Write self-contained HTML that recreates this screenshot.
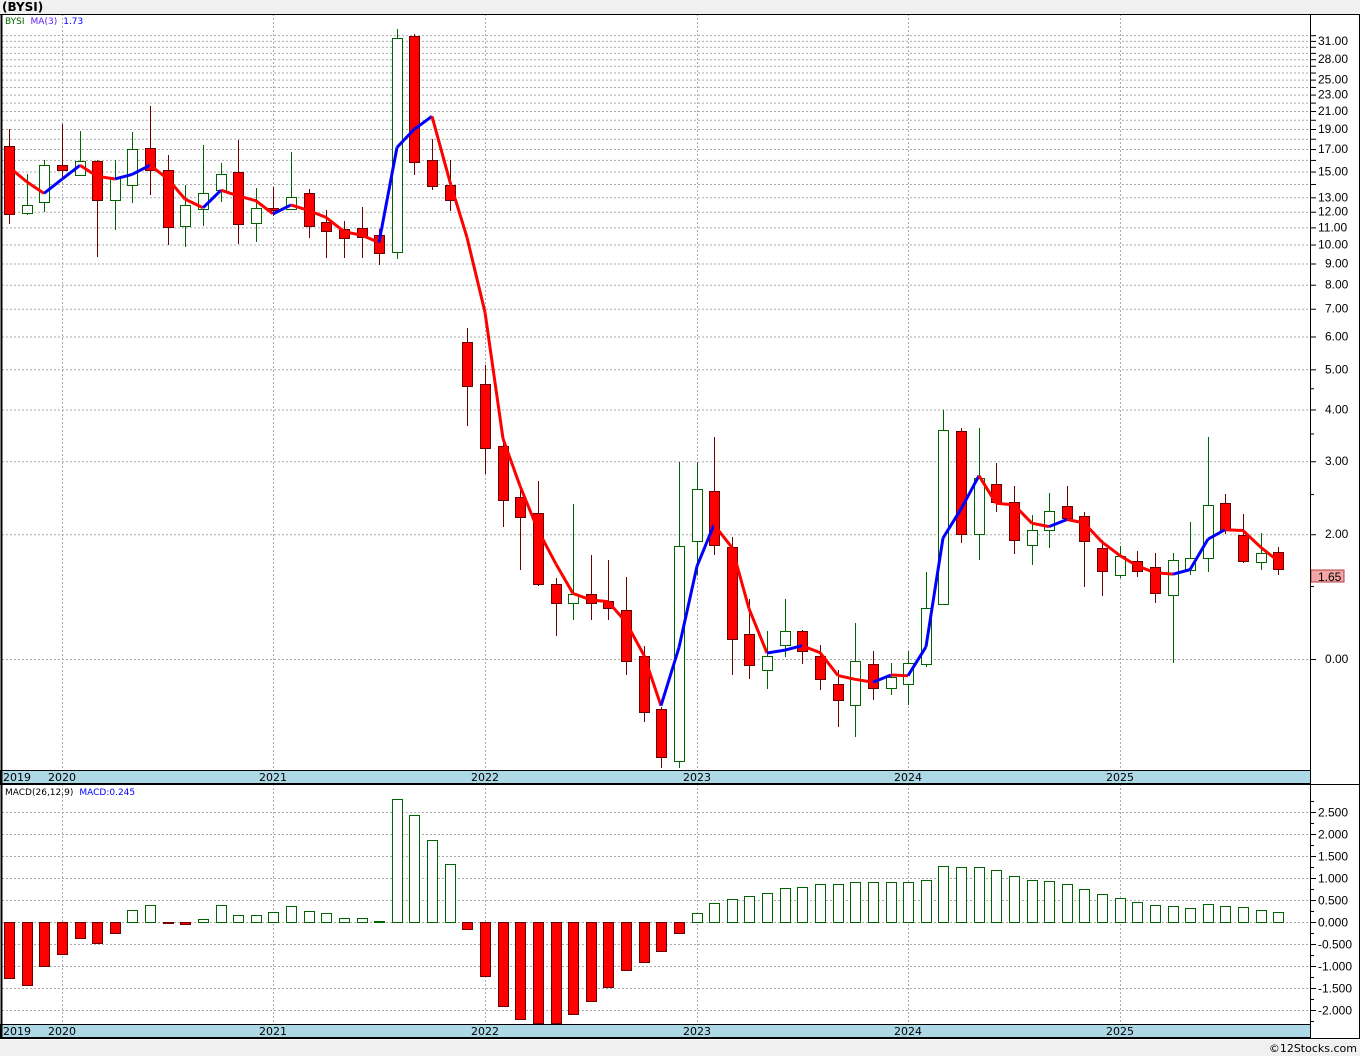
<!DOCTYPE html>
<html><head><meta charset="utf-8"><style>
html,body{margin:0;padding:0;background:#f0f0f0;width:1360px;height:1056px;overflow:hidden;font-family:"DejaVu Sans","Liberation Sans",sans-serif}
svg{display:block}
</style></head><body>
<svg id="s" width="1360" height="1056" xmlns="http://www.w3.org/2000/svg" font-family="DejaVu Sans, Liberation Sans, sans-serif" font-size="11">
<rect x="0" y="0" width="1360" height="1056" fill="#f0f0f0"/>
<text x="2" y="11" font-size="12" font-weight="bold" fill="#000">(BYSI)</text>
<rect x="0" y="14" width="1360" height="1026" fill="#fff"/>
<g id="g"></g>
<text x="1357" y="1052" font-size="11" text-anchor="end" fill="#000">©12Stocks.com</text>
</svg>
<script>
var g=document.getElementById('g'),h='';
function L(x1,y1,x2,y2,c,w,d){h+='<line x1="'+x1+'" y1="'+y1+'" x2="'+x2+'" y2="'+y2+'" stroke="'+c+'" stroke-width="'+(w||1)+'"'+(d?' stroke-dasharray="'+d+'"':'')+'/>';}
function R(x,y,w,hh,f,s){h+='<rect x="'+x+'" y="'+y+'" width="'+w+'" height="'+hh+'" fill="'+f+'" stroke="'+s+'" stroke-width="1"/>';}
function T(x,y,t,c,a){h+='<text x="'+x+'" y="'+y+'" fill="'+(c||'#000')+'"'+(a?' text-anchor="'+a+'"':'')+'>'+t+'</text>';}
function TA(x,y,t){h+='<text x="'+x+'" y="'+y+'" fill="#000" font-family="Liberation Sans, sans-serif" font-size="12">'+t+'</text>';}
var Y=function(p){return 659-180*Math.log(p);};
for(var p=1;p<=32;p++){var y=Y(p);if(y<16)continue;L(2,y+.5,1310,y+.5,'#aaa',1,'2,2');L(1310,y+.5,1316,y+.5,'#000');}
[1.5,2.5,3.5,4.5].forEach(function(p){L(1310,Y(p)+.5,1314,Y(p)+.5,'#000');});
var yrs=[[62,'2020'],[273,'2021'],[485,'2022'],[697,'2023'],[908,'2024'],[1120,'2025']];
yrs.forEach(function(a){L(a[0]+.5,14,a[0]+.5,770,'#aaa',1,'2,2');L(a[0]+.5,784,a[0]+.5,1024,'#aaa',1,'2,2');});
var lab=[[31,'31.00'],[28,'28.00'],[25,'25.00'],[23,'23.00'],[21,'21.00'],[19,'19.00'],[17,'17.00'],[15,'15.00'],[13,'13.00'],[12,'12.00'],[11,'11.00'],[10,'10.00'],[9,'9.00'],[8,'8.00'],[7,'7.00'],[6,'6.00'],[5,'5.00'],[4,'4.00'],[3,'3.00'],[2,'2.00'],[1,'0.00']];
lab.forEach(function(a){TA(a[1].length==4?1325:1318,Y(a[0])+4,a[1]);});
var C=[[146,214,129,224,'r'],[205,213,174,215,'g'],[165,202,160,212,'g'],[165,170,124,178,'r'],[161,175,131,175,'g'],[161,200,160,257,'r'],[178,200,160,230,'g'],[149,185,132,203,'g'],[148,170,106,195,'r'],[170,227,155,245,'r'],[205,226,185,247,'g'],[193,209,145,226,'g'],[174,190,163,202,'g'],[172,224,140,244,'r'],[208,223,188,242,'g'],[208,210,187,216,'r'],[197,209,152,210,'g'],[193,226,189,238,'r'],[222,231,210,258,'r'],[229,238,221,258,'r'],[228,237,207,258,'r'],[235,253,229,265,'r'],[38,252,29,259,'g'],[36,162,34,175,'r'],[160,186,139,190,'r'],[185,200,160,211,'r'],[342,386,328,426,'r'],[384,448,365,474,'r'],[446,500,440,527,'r'],[497,517,490,570,'r'],[513,584,481,586,'r'],[584,603,578,636,'r'],[594,603,504,620,'g'],[594,603,555,620,'r'],[601,608,560,620,'r'],[610,661,577,675,'r'],[656,712,646,722,'r'],[709,757,707,768,'r'],[546,761,462,768,'g'],[489,541,462,575,'g'],[491,545,437,555,'r'],[547,639,537,675,'r'],[634,665,599,679,'r'],[656,670,631,689,'g'],[631,645,599,657,'g'],[631,651,630,664,'r'],[656,679,645,690,'r'],[684,700,670,727,'r'],[661,705,623,737,'g'],[664,688,651,700,'r'],[677,688,663,695,'g'],[663,684,651,705,'g'],[608,664,572,667,'g'],[430,604,410,605,'g'],[431,534,428,543,'r'],[478,534,428,560,'g'],[484,502,463,512,'r'],[502,540,486,554,'r'],[530,545,515,565,'g'],[511,530,493,548,'g'],[506,518,486,520,'r'],[516,541,512,587,'r'],[548,571,540,596,'r'],[556,575,546,578,'g'],[561,571,551,577,'r'],[567,593,553,603,'r'],[560,595,553,663,'g'],[558,570,522,575,'g'],[505,558,437,572,'g'],[503,530,494,534,'r'],[535,561,514,563,'r'],[553,562,533,570,'g'],[552,569,547,575,'r']];
var X=function(i){return Math.round(9+17.63*i);};
var closes=[];
C.forEach(function(c,i){var x=X(i);var r=c[4]=='r';L(x+.5,c[2],x+.5,c[3],r?'#6b0000':'#006400');
 R(x-4.5,c[0]+.5,10,Math.max(1,c[1]-c[0]),r?'#ff0000':'#fff',r?'#6b0000':'#006400');
 closes.push(Math.exp((659-(r?c[1]:c[0]))/180));});
var ma=[];for(var i=0;i<closes.length;i++){var a=closes.slice(Math.max(0,i-2),i+1);ma.push(Y(a.reduce(function(s,v){return s+v;},0)/a.length));}
ma[0]=167;ma[1]=182;
for(var i=1;i<ma.length;i++){L(X(i-1),ma[i-1],X(i),ma[i],ma[i]<ma[i-1]?'#0000ff':'#ff0000',3);}
h+='<rect x="1311" y="570" width="33" height="12" fill="#f4a6a6" stroke="#b04040"/>';TA(1318,581,'1.65');
h+='<text x="5" y="24" font-size="9"><tspan fill="#006400">BYSI</tspan><tspan fill="#6020ff" dx="6">MA(3)</tspan><tspan fill="#0000ff" dx="6">1.73</tspan></text>';
var Z=922,K=44;
for(var v=-2;v<=2.5;v+=0.5){var y=Math.round(Z-v*K)+.5;L(2,y,1310,y,'#aaa',1,'2,2');L(1310,y,1316,y,'#000');TA(1318,y+4,(v<0?'-':'')+Math.abs(v).toFixed(3));}
for(var v=-2.25;v<=2.8;v+=0.5){var y=Math.round(Z-v*K)+.5;L(1310,y,1314,y,'#000');}
var M=[-1.27,-1.43,-1.0,-0.72,-0.37,-0.47,-0.25,0.27,0.38,-0.03,-0.05,0.07,0.38,0.15,0.17,0.22,0.37,0.25,0.2,0.1,0.1,0.03,2.8,2.43,1.86,1.31,-0.16,-1.22,-1.9,-2.2,-2.35,-2.33,-2.1,-1.8,-1.47,-1.1,-0.9,-0.65,-0.24,0.2,0.43,0.53,0.6,0.67,0.77,0.8,0.86,0.86,0.9,0.9,0.9,0.9,0.96,1.28,1.25,1.25,1.18,1.05,0.96,0.93,0.86,0.75,0.63,0.55,0.45,0.38,0.36,0.32,0.4,0.37,0.33,0.28,0.23];
M.forEach(function(v,i){var x=X(i);var t=Math.round(Z-Math.max(v,0)*K),b=Math.round(Z-Math.min(v,0)*K);if(b>1023)b=1023;
 if(v<0)R(x-4.5,t+.5,10,Math.max(1,b-t),'#ff0000','#6b0000');else R(x-4.5,t+.5,10,Math.max(1,b-t),'#fff','#006400');});
h+='<text x="5" y="795" font-size="9"><tspan fill="#000">MACD(26,12,9)</tspan><tspan fill="#0000ff" dx="6">MACD:0.245</tspan></text>';
[770,1024].forEach(function(y){R(0.5,y+.5,1310,13,'#add8e6','#000');T(3,y+11,'2019');yrs.forEach(function(a){T(a[0],y+11,a[1],'#000','middle');});});
L(1310.5,14,1310.5,1038,'#000');L(0,14.5,1360,14.5,'#000');L(0,784.5,1360,784.5,'#000');L(0,1038.5,1360,1038.5,'#000');L(1.5,14,1.5,1038,'#000',2);L(1359.5,14,1359.5,1038,'#000');
g.innerHTML=h;
</script>
</body></html>
